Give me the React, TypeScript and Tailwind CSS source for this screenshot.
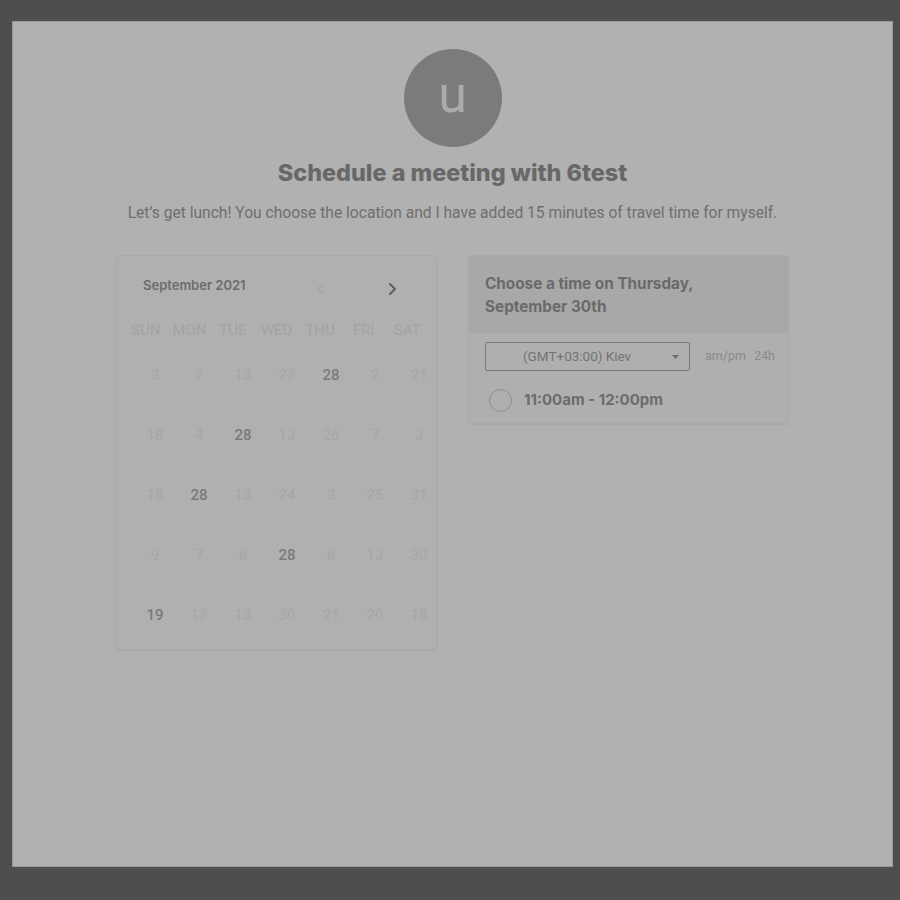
import React from 'react';

const days = ['SUN', 'MON', 'TUE', 'WED', 'THU', 'FRI', 'SAT'];

// bold cells are the "available" days
const weeks: { n: number; b?: boolean }[][] = [
    [{ n: 3 }, { n: 7 }, { n: 13 }, { n: 27 }, { n: 28, b: true }, { n: 2 }, { n: 21 }],
    [{ n: 18 }, { n: 4 }, { n: 28, b: true }, { n: 13 }, { n: 26 }, { n: 7 }, { n: 3 }],
    [{ n: 18 }, { n: 28, b: true }, { n: 13 }, { n: 24 }, { n: 3 }, { n: 25 }, { n: 31 }],
    [{ n: 9 }, { n: 7 }, { n: 8 }, { n: 28, b: true }, { n: 8 }, { n: 13 }, { n: 30 }],
    [{ n: 19, b: true }, { n: 17 }, { n: 13 }, { n: 30 }, { n: 21 }, { n: 20 }, { n: 18 }],
];

const Calendar = () => (
    <div className="w-[321px] pt-[20px] pb-[4px] border border-[#a9a9a9] rounded-[3px] bg-[#b0b0b0] shadow-[0_1px_2px_rgba(0,0,0,0.06)]">
        <div className="flex items-center h-[20px] pl-[26px]">
            <span className="font-['Inter'] font-semibold text-[13px] text-[#6c6c6c]">September 2021</span>
            <div className="ml-auto mr-[34px] flex items-center gap-[51px] mt-[6px]">
                <svg width="20" height="20" viewBox="0 0 20 20" fill="none" stroke="#a2a2a2" strokeWidth="1.6" strokeLinecap="round" strokeLinejoin="round">
                    <path d="M12 5l-5 5 5 5" />
                </svg>
                <svg width="20" height="20" viewBox="0 0 20 20" fill="none" stroke="#5e5e5e" strokeWidth="2" strokeLinecap="round" strokeLinejoin="round">
                    <path d="M8 5l5 5-5 5" />
                </svg>
            </div>
        </div>
        <div className="grid grid-cols-7 w-[305px] ml-[7px] mt-[23px] h-[20px] items-center">
            {days.map(d => (
                <div key={d} className="text-center font-['Roboto'] text-[15px] text-[#a3a3a3]">{d}</div>
            ))}
        </div>
        <div className="mt-[6px] ml-[16px] w-[308px]">
            {weeks.map((w, i) => (
                <div key={i} className="grid grid-cols-7 h-[60px] items-center">
                    {w.map((c, j) => (
                        <div
                            key={j}
                            className={c.b
                                ? 'text-center font-[\'Roboto\'] font-medium text-[15px] text-[#7a7a7a]'
                                : 'text-center font-[\'Roboto\'] text-[15px] text-[#a6a6a6]'}
                        >
                            {c.n}
                        </div>
                    ))}
                </div>
            ))}
        </div>
    </div>
);

const TimePicker = () => (
    <div className="w-[321px] border border-[#a9a9a9] rounded-[3px] bg-[#afafaf] shadow-[0_1px_2px_rgba(0,0,0,0.06)] overflow-hidden">
        <div className="bg-[#a8a8a8] h-[78px] pt-[16px] pl-[16px] font-['Inter'] font-bold text-[15.3px] leading-[23px] text-[#6a6a6a]">
            Choose a time on Thursday,<br />September 30th
        </div>
        <div className="flex items-center pl-[16px] pt-[8px]">
            <div className="relative w-[205px] h-[29px] border border-[#787878] rounded-[2px] flex items-center pl-[37px]">
                <span className="font-['Roboto'] text-[13.5px] text-[#737373]">(GMT+03:00) Kiev</span>
                <svg className="absolute right-[10px] top-[12px]" width="7" height="4" viewBox="0 0 7 4">
                    <path d="M0 0h7L3.5 4z" fill="#6e6e6e" />
                </svg>
            </div>
            <div className="ml-[15px] flex gap-[8px] font-['Roboto'] text-[12.5px] text-[#8b8b8b]">
                <span>am/pm</span>
                <span>24h</span>
            </div>
        </div>
        <div className="flex items-center h-[52px] pt-[6px] pl-[20px]">
            <div className="w-[23px] h-[23px] rounded-full border-[1.5px] border-[#8c8c8c]" />
            <span className="ml-[12px] font-['Inter'] font-bold text-[15px] text-[#6c6c6c]">11:00am - 12:00pm</span>
        </div>
    </div>
);

export default function App() {
    return (
        <div className="w-[900px] h-[900px] bg-[#4e4e4e] pt-[21px] pl-[12px]">
            <div className="w-[881px] h-[846px] bg-[#b1b1b1] border border-[#999] flex flex-col items-center pt-[27px]">
                <div className="w-[98px] h-[98px] rounded-full bg-[#7b7b7b] flex items-center justify-center">
                    <span className="font-['Roboto'] text-[52px] leading-none text-[#ababab] -mt-[6px]">u</span>
                </div>
                <h1 className="mt-[10px] h-[32px] leading-[32px] font-['Inter'] font-extrabold text-[23.4px] text-[#686868]">
                    Schedule a meeting with 6test
                </h1>
                <p className="mt-[14px] leading-[20px] font-['Roboto'] text-[15.6px] text-[#6f6f6f]">
                    Let’s get lunch! You choose the location and I have added 15 minutes of travel time for myself.
                </p>
                <div className="mt-[32px] flex items-start gap-[31px]">
                    <Calendar />
                    <TimePicker />
                </div>
            </div>
        </div>
    );
}
